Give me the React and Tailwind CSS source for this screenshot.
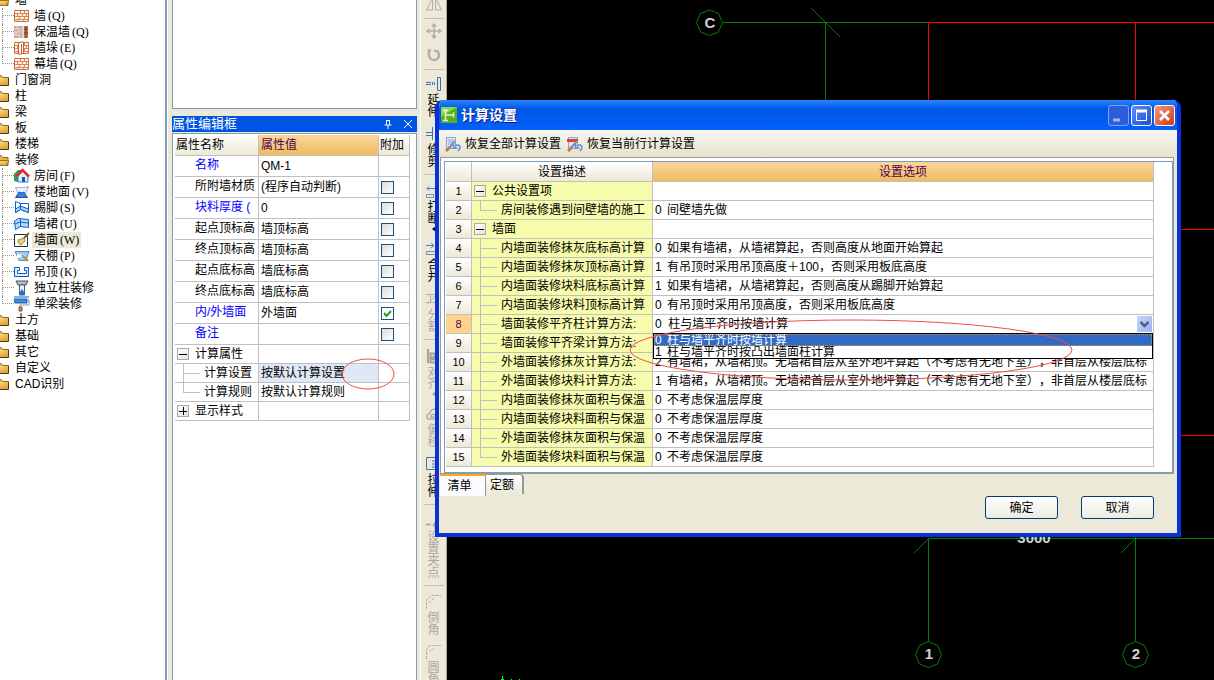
import React, { useState } from 'react';
import clsx from 'clsx';

const treeItems = [
  { label: '墙', folder: 'open' },
  { label: '墙', hotkey: 'Q', icon: 'brick' },
  { label: '保温墙', hotkey: 'Q', icon: 'insulated' },
  { label: '墙垛', hotkey: 'E', icon: 'pier' },
  { label: '幕墙', hotkey: 'Q', icon: 'brick', last: true },
  { label: '门窗洞', folder: 'closed' },
  { label: '柱', folder: 'closed' },
  { label: '梁', folder: 'closed' },
  { label: '板', folder: 'closed' },
  { label: '楼梯', folder: 'closed' },
  { label: '装修', folder: 'open' },
  { label: '房间', hotkey: 'F', icon: 'house' },
  { label: '楼地面', hotkey: 'V', icon: 'floor' },
  { label: '踢脚', hotkey: 'S', icon: 'skirting' },
  { label: '墙裙', hotkey: 'U', icon: 'dado' },
  { label: '墙面', hotkey: 'W', icon: 'wallFace', selected: true },
  { label: '天棚', hotkey: 'P', icon: 'ceiling' },
  { label: '吊顶', hotkey: 'K', icon: 'suspended' },
  { label: '独立柱装修', icon: 'column' },
  { label: '单梁装修', icon: 'roller', last: true },
  { label: '土方', folder: 'closed' },
  { label: '基础', folder: 'closed' },
  { label: '其它', folder: 'closed' },
  { label: '自定义', folder: 'closed' },
  { label: 'CAD识别', folder: 'closed' },
];

const properties = [
  { name: '名称', value: 'QM-1', blue: true },
  { name: '所附墙材质', value: '(程序自动判断)', check: false },
  { name: '块料厚度 (', value: '0', blue: true, check: false },
  { name: '起点顶标高', value: '墙顶标高', check: false },
  { name: '终点顶标高', value: '墙顶标高', check: false },
  { name: '起点底标高', value: '墙底标高', check: false },
  { name: '终点底标高', value: '墙底标高', check: false },
  { name: '内/外墙面', value: '外墙面', blue: true, check: true },
  { name: '备注', value: '', blue: true, check: false },
];

const tools = [
  { label: '延伸', icon: 'extend' },
  { label: '修剪', icon: 'trim', divider: true },
  { label: '打断', icon: 'break', arrow: true },
  { label: '合并', icon: 'merge' },
  { label: '分割', icon: 'split', disabled: true, divider: true },
  { label: '对齐', icon: 'align', disabled: true, arrow: true },
  { label: '偏移', icon: 'offset', disabled: true },
  { label: '拉伸', icon: 'stretch', divider: true },
  { label: '设置夹点', icon: 'grip', disabled: true, divider: true },
  { label: '倒角', icon: 'chamfer', disabled: true },
  { label: '圆角', icon: 'fillet', disabled: true },
];

const settings = [
  { name: '公共设置项', group: true },
  { name: '房间装修遇到间壁墙的施工', code: '0', text: '间壁墙先做', last: true },
  { name: '墙面', group: true },
  { name: '内墙面装修抹灰底标高计算', code: '0', text: '如果有墙裙，从墙裙算起，否则高度从地面开始算起' },
  { name: '内墙面装修抹灰顶标高计算', code: '1', text: '有吊顶时采用吊顶高度＋100，否则采用板底高度' },
  { name: '内墙面装修块料底标高计算', code: '1', text: '如果有墙裙，从墙裙算起，否则高度从踢脚开始算起' },
  { name: '内墙面装修块料顶标高计算', code: '0', text: '有吊顶时采用吊顶高度，否则采用板底高度' },
  { name: '墙面装修平齐柱计算方法:', editing: true },
  { name: '墙面装修平齐梁计算方法:' },
  { name: '外墙面装修抹灰计算方法:', code: '2', text: '有墙裙，从墙裙顶。无墙裙首层从室外地坪算起（不考虑有无地下室），非首层从楼层底标' },
  { name: '外墙面装修块料计算方法:', code: '1', text: '有墙裙，从墙裙顶。无墙裙首层从室外地坪算起（不考虑有无地下室），非首层从楼层底标' },
  { name: '内墙面装修抹灰面积与保温', code: '0', text: '不考虑保温层厚度' },
  { name: '内墙面装修块料面积与保温', code: '0', text: '不考虑保温层厚度' },
  { name: '外墙面装修抹灰面积与保温', code: '0', text: '不考虑保温层厚度' },
  { name: '外墙面装修块料面积与保温', code: '0', text: '不考虑保温层厚度', last: true },
];

const columnOptions = ['柱与墙平齐时按墙计算', '柱与墙平齐时按凸出墙面柱计算'];

function FolderIcon({ open }) {
  return (
    <svg className="-ml-1.5 h-4 w-[15px] shrink-0" viewBox="0 0 15 16">
      <defs>
        <linearGradient id="folder" x1="0" y1="0" x2="1" y2="1">
          <stop offset="0" stopColor="#ffe48c" />
          <stop offset="1" stopColor="#dd9c2a" />
        </linearGradient>
      </defs>
      <path d="M0 3.500h7l2 2h5v8H0z" fill="#e8b448" stroke="#8a6414" />
      {open ? (
        <path d="M0 8.500h15l-3 5H0z" fill="url(#folder)" stroke="#9c7420" />
      ) : (
        <>
          <path d="M0 6h14v7H0z" fill="url(#folder)" />
          <path d="M0 13.500h14.500v-8" fill="none" stroke="#4a3a18" />
        </>
      )}
    </svg>
  );
}

function Bricks() {
  return (
    <>
      <path d="M.5 2.500h14v11H.5z" fill="#fff1e4" stroke="#c8703c" />
      <path d="M1 5.500h13M1 8.500h13M1 11.500h13M6.500 3v2M10.500 3v2M3.500 6v2M8.500 6v2M12.500 6v2M5.500 9v2M10.500 9v2M4 12v1M9.500 12v1" stroke="#d88858" />
    </>
  );
}

const treeIcons = {
  brick: <Bricks />,
  insulated: (
    <>
      <path d="M0 2h7v12H0z" fill="#d8a0a0" />
      <path d="M0 5h7M0 8h7M0 11h7M3 2v3M5 5v3M2 8v3M5 11v3" stroke="#f4dada" />
      <path d="M7.500 2v12M9 2v12" stroke="#a8b8a8" />
      <path d="M10 2h4v12h-4z" fill="#c87848" />
      <path d="M10 5h4M10 9h4M12 2v12" stroke="#7c3c1c" />
    </>
  ),
  pier: (
    <>
      <Bricks />
      <path d="M4.500 4l2-2h3v11l-2 1h-3z" fill="#fff" stroke="#d05c24" />
      <path d="M7.500 4v10" stroke="#d05c24" />
    </>
  ),
  house: (
    <>
      <path d="M0 6l4-4h4L4 8v6L0 13z" fill="#2f9c48" />
      <path d="M4 8l5-5 5 5v6H4z" fill="#dfeeff" stroke="#3878c8" />
      <path d="M3 8l5.500-6L15 8.500" fill="none" stroke="#e02828" strokeWidth="2.500" />
      <path d="M8 9h3v5H8z" fill="#1858a8" />
    </>
  ),
  floor: (
    <>
      <path d="M1 3l3 3M14 2l-3 5M1 14l3-4M14 14l-3-4" stroke="#8c7040" />
      <path d="M1.500 3.500h13l-3 6H4z" fill="#e8f2ff" stroke="#a8b8d0" />
      <path d="M2 13.500L5 8l3 1 2-1 3 5.500z" fill="#3a80e0" stroke="#1458b8" />
    </>
  ),
  skirting: (
    <>
      <path d="M1.500 1.500l5 2h8v9l-8-3-5 3z" fill="#fff" stroke="#0a64c8" />
      <path d="M1.500 9l5-3 8 3v3.500l-8-3-5 3z" fill="#a8d4ff" stroke="#0a64c8" />
      <path d="M6.500 3.500v6" stroke="#0a64c8" />
    </>
  ),
  dado: (
    <>
      <path d="M.5 5l4-2.500 10 1v8l-8-1-5 3z" fill="#b8d8f8" stroke="#0a64c8" />
      <path d="M1 8l5-2 8 1M6.500 3v8" fill="none" stroke="#0a64c8" />
    </>
  ),
  wallFace: (
    <>
      <path d="M.5 2.500h13v12H.5z" fill="#fff" stroke="#1c2c54" />
      <path d="M4 8l6-2 1 3-4 4c-2 0-3-3-3-5z" fill="#e8d070" stroke="#a09030" />
      <path d="M10 6l5-5" stroke="#7c6420" strokeWidth="2" />
    </>
  ),
  ceiling: (
    <>
      <path d="M1 3.500h14l-3 9H5z" fill="#9cc8f8" stroke="#5c8cc8" />
      <path d="M1 12l4-6M4 9l5-2 2 3" fill="none" stroke="#fff" strokeWidth="2" />
      <path d="M8 7l6 6" stroke="#b09030" strokeWidth="2" />
    </>
  ),
  suspended: (
    <path d="M.5 3.500h5v3h-2v3h9v-3h-2v-3h4v9H.5z" fill="#dcecff" stroke="#0a5cc0" />
  ),
  column: (
    <>
      <path d="M2 1h12l-2 4H4z" fill="#bcbcbc" stroke="#505050" />
      <path d="M5.500 5h5v10h-5z" fill="#e8f2ff" stroke="#485878" />
      <path d="M6 12l2-3 2 3v3H6z" fill="#2470d0" />
    </>
  ),
  roller: (
    <>
      <path d="M0 1h15M0 3h13v4H1z" fill="#3c8ce0" stroke="#1460b8" />
      <path d="M13 4h2v5H6v2" fill="none" stroke="#8c98a8" />
      <path d="M5 11h3v4H5z" fill="#c88c58" stroke="#8c5424" />
    </>
  ),
};

function TreePanel() {
  return (
    <nav className="w-[165px] shrink-0 overflow-hidden bg-white">
      <ul className="-mt-2">
        {treeItems.map((item, i) => (
          <li key={i}>
            <button className="flex h-4 items-center whitespace-nowrap">
              {item.folder ? (
                <>
                  <FolderIcon open={item.folder === 'open'} />
                  <span className="pl-1.5">{item.label}</span>
                </>
              ) : (
                <>
                  <span className="ml-0.5 flex h-4 w-3 shrink-0 flex-col">
                    <span className="h-2 w-full border-b border-l border-dotted border-[#9c9884]" />
                    {!item.last && <span className="grow border-l border-dotted border-[#9c9884]" />}
                  </span>
                  <svg className="h-4 w-4 shrink-0" viewBox="0 0 16 16" fill="none">{treeIcons[item.icon]}</svg>
                  <span className={clsx('ml-0.5 px-0.5', item.selected && 'bg-[#ece9d8]')}>
                    {item.label}
                    {item.hotkey && <span className="pl-0.5 font-['Liberation_Serif',serif]">({item.hotkey})</span>}
                  </span>
                </>
              )}
            </button>
          </li>
        ))}
      </ul>
    </nav>
  );
}

function ExpandBox({ open }) {
  return (
    <button
      aria-label={open ? '折叠' : '展开'}
      className="flex size-3 shrink-0 items-center justify-center border border-[#a8a8a8] bg-linear-to-br from-white to-[#e4e2da]"
    >
      <svg className="size-2" viewBox="0 0 8 8">
        <path d={open ? 'M0 4.500h8' : 'M0 4.500h8M4.500 0v8'} stroke="#000" />
      </svg>
    </button>
  );
}

function Branch({ last }) {
  return (
    <span className="ml-2 flex w-[17px] shrink-0 flex-col self-stretch">
      <span className="h-2.5 border-b border-l border-[#c0c0c0]" />
      {!last && <span className="grow border-l border-[#c0c0c0]" />}
    </span>
  );
}

function PropertyPanel() {
  const cell = 'border-b border-r border-[#c0c0c0] p-0';
  return (
    <section className="flex w-[245px] shrink-0 flex-col">
      <div className="h-[109px] border border-t-0 border-[#7f9db9] bg-white" />
      <header className="mt-[7px] flex h-4 items-center bg-[#0054e3] text-white">
        <h2 className="grow text-[13px] leading-4">属性编辑框</h2>
        <button aria-label="固定" className="mr-2.5">
          <svg className="size-2.5" viewBox="0 0 10 10" fill="none" stroke="#fff">
            <path d="M3.500 1v4.500M6.500 1v4.500M3 1.500h4M1.500 6h7M5 6v4" />
          </svg>
        </button>
        <button aria-label="关闭" className="mr-1">
          <svg className="size-2.5" viewBox="0 0 10 10" stroke="#fff">
            <path d="M1 1l8 8M9 1L1 9" />
          </svg>
        </button>
      </header>
      <div className="relative mt-px grow border border-b-0 border-[#7f9db9] bg-white pl-0.5 pt-px">
        <table className="w-[235px] table-fixed border-separate border-spacing-0 whitespace-nowrap">
          <colgroup>
            <col className="w-[84px]" />
            <col className="w-[120px]" />
            <col />
          </colgroup>
          <thead>
            <tr className="h-[21px] text-left">
              <th className={clsx(cell, 'bg-linear-to-b from-white to-[#ece9d8] pl-px font-normal')}>属性名称</th>
              <th className={clsx(cell, 'bg-linear-to-b from-[#f9d79c] to-[#efbc5c] pl-0.5 font-normal text-[#500050]')}>属性值</th>
              <th className={clsx(cell, 'bg-linear-to-b from-white to-[#ece9d8] pl-px font-normal')}>附加</th>
            </tr>
          </thead>
          <tbody>
            {properties.map((p) => (
              <tr key={p.name} className="h-[21px]">
                <td className={clsx(cell, 'pb-0.5 pl-5', p.blue && 'text-[#0000ff]')}>{p.name}</td>
                <td className={clsx(cell, 'pl-0.5')}>{p.value}</td>
                <td className={cell}>
                  {p.check !== undefined && (
                    <input
                      type="checkbox"
                      aria-label={p.name}
                      defaultChecked={p.check}
                      className="ml-0.5 block size-[13px] appearance-none border border-[#1c5180] bg-linear-to-br from-[#dcdcd7] to-white checked:bg-[url('data:image/svg+xml,%3Csvg%20xmlns=%22http://www.w3.org/2000/svg%22%20viewBox=%220%200%2011%2011%22%3E%3Cpath%20d=%22M2%205l2.500%203L9%203%22%20fill=%22none%22%20stroke=%22%2321a121%22%20stroke-width=%222%22/%3E%3C/svg%3E')]"
                    />
                  )}
                </td>
              </tr>
            ))}
            <tr className="h-[19px]">
              <td className={cell}>
                <span className="flex items-center gap-1.5 pl-0.5"><ExpandBox open />计算属性</span>
              </td>
              <td className={cell} />
              <td className={cell} />
            </tr>
            {['计算设置', '计算规则'].map((name, i) => (
              <tr key={name} className="h-[19px]">
                <td className={cell}>
                  <span className="flex h-[18px] items-center"><Branch last={i === 1} /><span className="pl-1">{name}</span></span>
                </td>
                <td className={clsx(cell, 'pl-0.5', i === 0 && 'bg-[#dfe8f6]')}>按默认{name}</td>
                <td className={cell} />
              </tr>
            ))}
            <tr className="h-[19px]">
              <td className={cell}>
                <span className="flex items-center gap-1.5 pl-0.5"><ExpandBox />显示样式</span>
              </td>
              <td className={cell} />
              <td className={cell} />
            </tr>
          </tbody>
        </table>
        <svg className="pointer-events-none absolute left-[168px] top-[224px] h-8 w-[54px]" viewBox="0 0 54 32" fill="none">
          <ellipse cx="27" cy="16" rx="26" ry="15" stroke="#f04c4c" />
        </svg>
      </div>
    </section>
  );
}

const toolIcons = {
  extend: <path d="M0 6.500h5M0 8.500h5M6.500 6v3M8.500 6v3M11.500 1.500h3v13h-3z" stroke="#3c70b0" />,
  trim: <path d="M0 6.500h6M0 9.500h6M6.500 1v13M9.500 1v13" stroke="#3c70b0" />,
  break: (
    <>
      <path d="M1 5.500h9M3 3.500l-2 2 2 2" stroke="#4878d0" />
      <path d="M.5 11.500h7v3h-7zM9.500 11.500h5v3h-5z" stroke="#788cb0" />
    </>
  ),
  merge: (
    <>
      <path d="M0 4.500h8M5 2l3 2.500L5 7" stroke="#4878d0" />
      <path d="M.5 10.500h14v3H.5z" stroke="#788cb0" />
    </>
  ),
  split: <path d="M0 3.500h14M0 11.500h14M2 13L12 2M4.500 4v8M10.500 4v8" stroke="#b4b09c" />,
  align: <path d="M2 1v14M4.500 5.500h4v4h-4zM4.500 11.500h9v3h-9z" stroke="#a8a490" strokeWidth="2" />,
  offset: <path d="M2 13c-3-4 1-5 2-6 1-5 6-5 7-1 3 0 4 5 1 7zM5 11c-1-3 4-4 5 0z" stroke="#b4b09c" strokeWidth="1.500" />,
  stretch: <path d="M10 1.500H.5v12H10M6 5h3M6 8h3M6 11h3" stroke="#3c70b0" />,
  grip: <path d="M0 11.500h5M7 13l5-8M9 12h4v3H9z" stroke="#a8a490" strokeWidth="1.500" />,
  chamfer: <path d="M.5 15V6l5-4.500H15M3 9l5-5" stroke="#b4b09c" strokeDasharray="3 1" />,
  fillet: <path d="M.5 15V8c0-4 2-6.500 6-6.500H15M4 8c0-2 2-3 4-3" stroke="#b4b09c" strokeDasharray="3 1" />,
};

function EditToolbar() {
  return (
    <aside className="ml-[3px] flex w-[27px] shrink-0 flex-col items-center overflow-hidden border-l border-r border-l-white border-r-[#aca899]">
      <button aria-label="镜像">
        <svg className="-mt-1 block size-4" viewBox="0 0 16 16" fill="none" stroke="#b4b09c">
          <path d="M6.500 2v12h-6zM9.500 2v12h6z" />
        </svg>
      </button>
      <hr className="mt-1.5 w-5 border-[#c4c0ac]" />
      <button aria-label="移动">
        <svg className="mt-1 block size-4" viewBox="0 0 16 16" fill="none" stroke="#b4b09c" strokeWidth="1.500">
          <path d="M8 1v14M1 8h14M6 3.500L8 1l2 2.500M6 12.500L8 15l2-2.500M3.500 6L1 8l2.500 2M12.500 6L15 8l-2.500 2" />
        </svg>
      </button>
      <button aria-label="旋转">
        <svg className="mt-2 block size-4" viewBox="0 0 16 16" fill="none" stroke="#b4b09c" strokeWidth="2.500">
          <path d="M5 3.500h-2v5a5 5 0 0 0 10-1c0-3-2-4-5-3.500" />
        </svg>
      </button>
      <hr className="mb-1 mt-1.5 w-5 border-[#c4c0ac]" />
      {tools.map((t) => (
        <React.Fragment key={t.label}>
          <button
            disabled={t.disabled}
            className={clsx('flex shrink-0 flex-col items-center pb-1.5', t.disabled ? 'text-[#aca899]' : 'text-black')}
          >
            <svg className="my-0.5 h-4 w-4" viewBox="0 0 16 16" fill="none">{toolIcons[t.icon]}</svg>
            <span className="w-3 break-all text-xs leading-3">{t.label}</span>
            {t.arrow && (
              <svg className="h-2 w-2" viewBox="0 0 8 8"><path d="M6 1v6L2 4z" fill="currentColor" /></svg>
            )}
          </button>
          {t.divider && <hr className="mb-1.5 w-5 shrink-0 border-[#c4c0ac]" />}
        </React.Fragment>
      ))}
    </aside>
  );
}

function DrawingCanvas() {
  return (
    <main className="min-w-0 grow bg-black">
      <svg className="block h-full w-full" fill="none" stroke="#008000">
        <path d="M276 22.500h205M364 8l29 29M378.500 22v90" />
        <path d="M481.500 112V22.500H2000M688.500 22v90M700 229.500h1300M700 435.500h1300" stroke="#ff0000" />
        <path d="M481.500 641V538.500H2000M688.500 530v111M481 539l-14 14M688 539l-14 14" />
        <path d="M262.500 10l9 3.500 4 9-4 9.500-9 3.500-9-3.500-4-9.500 4-9z" />
        <path d="M481.500 641.500l9 4 4 9-4 9.500-9 3.500-9-3.500-4-9.500 4-9z" />
        <path d="M688.500 641.500l9 4 4 9-4 9.500-9 3.500-9-3.500-4-9.500 4-9z" />
        <g fill="#d0d0d0" stroke="none" textAnchor="middle" className="font-['Liberation_Sans',sans-serif] text-[15px] font-bold">
          <text x="263" y="28">C</text>
          <text x="482" y="659">1</text>
          <text x="689" y="659">2</text>
          <text x="587" y="543">3000</text>
        </g>
        <path d="M55.500 676v4M54 679.500h3M64 679.500h1M72 679.500h1" stroke="#00ff00" />
      </svg>
    </main>
  );
}

function RestoreIcon({ row }) {
  return (
    <svg className="size-4" viewBox="0 0 16 16" fill="none">
      <path d="M1.500 1.500h9v11h-9z" fill="#dbe7f8" stroke="#8ca4cc" />
      {row ? <path d="M0 3h11v3H0z" fill="#e03838" /> : <path d="M3 4h6M3 6h6M3 8h6" stroke="#88acdc" />}
      <path d="M4 12l6-7" stroke="#7c90c0" strokeWidth="2" />
      <path d="M1 15l4-4" stroke="#c87850" strokeWidth="3" />
      <path d="M10 10c4-3 7 1 3 5M8.500 8v4h4" stroke="#5c8cd8" strokeWidth="1.500" />
    </svg>
  );
}

function TitleButton({ label, className, children }) {
  return (
    <button aria-label={label} className={clsx('size-[21px] rounded-[3px] border', className)}>
      <svg className="size-full" viewBox="0 0 19 19" fill="none" stroke="#fff">{children}</svg>
    </button>
  );
}

function SettingOption({ row }) {
  const [value, setValue] = useState(0);

  if (!row.editing) {
    return (
      <span className="flex overflow-hidden pl-0.5">
        <span className="w-3 shrink-0">{row.code}</span>
        {row.text}
      </span>
    );
  }

  return (
    <div className="relative">
      <select
        aria-label={row.name}
        value={value}
        onChange={(e) => setValue(Number(e.target.value))}
        className="block h-[18px] w-full appearance-none bg-white pl-0.5 leading-4"
      >
        {columnOptions.map((option, i) => (
          <option key={option} value={i}>{i}{'\u00a0\u00a0'}{option}</option>
        ))}
      </select>
      <svg className="pointer-events-none absolute right-px top-px h-4 w-[15px] bg-linear-to-br from-[#c8d6fb] to-[#9cb2f2]" viewBox="0 0 15 16" fill="none">
        <path d="M3.500 6l4 4 4-4" stroke="#4d6185" strokeWidth="2.500" />
      </svg>
      <ul role="listbox" className="absolute left-0 right-0 top-full border border-black bg-white">
        {columnOptions.map((option, i) => (
          <li
            key={option}
            role="option"
            aria-selected={value === i}
            className={clsx(
              'flex h-3 overflow-hidden pl-px leading-3',
              value === i && 'bg-[#316ac5] text-white outline -outline-offset-1 outline-dotted outline-[#ce953a]',
            )}
          >
            <span className="w-3 shrink-0">{i}</span>
            {option}
          </li>
        ))}
      </ul>
    </div>
  );
}

function SettingsTable() {
  const cell = 'border-b border-r border-[#c0c0c0] p-0';
  const head = 'bg-linear-to-b from-white to-[#ece9d8] font-normal';
  return (
    <table className="w-full table-fixed border-separate border-spacing-0 whitespace-nowrap">
      <colgroup>
        <col className="w-[26px]" />
        <col className="w-[181px]" />
        <col />
      </colgroup>
      <thead>
        <tr className="h-5">
          <th className={clsx(cell, head)} />
          <th className={clsx(cell, head)}>设置描述</th>
          <th className={clsx(cell, 'bg-linear-to-b from-[#f9d79c] to-[#efbc5c] font-normal text-[#500050]')}>设置选项</th>
        </tr>
      </thead>
      <tbody>
        {settings.map((row, i) => (
          <tr key={row.name} className="h-[19px]">
            <td
              className={clsx(
                cell,
                'text-center text-[11px]',
                row.editing ? 'bg-[#ffd38c] text-[#500050]' : 'bg-linear-to-b from-white to-[#ece9d8]',
              )}
            >
              {i + 1}
            </td>
            <td className={clsx(cell, 'bg-[#f7fbac]')}>
              {row.group ? (
                <span className="flex items-center gap-1.5 pl-0.5"><ExpandBox open />{row.name}</span>
              ) : (
                <span className="flex h-[18px] items-center"><Branch last={row.last} /><span className="pl-1">{row.name}</span></span>
              )}
            </td>
            <td className={cell}><SettingOption row={row} /></td>
          </tr>
        ))}
      </tbody>
    </table>
  );
}

function SettingsDialog() {
  return (
    <div
      role="dialog"
      aria-label="计算设置"
      className="absolute left-[435px] top-[100px] flex w-[746px] flex-col overflow-hidden rounded-t-lg border-x-4 border-b-4 border-[#0831d9] bg-[#ece9d8]"
    >
      <header className="-mx-1 flex h-[30px] items-center gap-0.5 bg-linear-to-b from-[#2a86ff] via-[#0055e5] via-30% to-[#0262fb] px-1.5 text-white">
        <svg className="mr-0.5 size-4 shrink-0" viewBox="0 0 16 16" fill="none">
          <path d="M0 0h16v16H0z" fill="#58b01c" />
          <path d="M0 0h16L0 10z" fill="#8cd850" />
          <path d="M4.500 2v12M2 3.500h5M2 13.500h5M5 8h8M12.500 5.500v5" stroke="#e4f0dc" strokeWidth="1.500" />
        </svg>
        <h1 className="grow text-sm font-bold [text-shadow:1px_1px_#0f1089]">计算设置</h1>
        <TitleButton label="最小化" className="border-[#7ea2f4] bg-[#2a5cdc]">
          <path d="M4 14h7" stroke="#9cb4f0" strokeWidth="3" />
        </TitleButton>
        <TitleButton label="最大化" className="border-white bg-linear-to-br from-[#5c8cf8] to-[#1c4cd8]">
          <path d="M4.500 5v9.500h10V5" />
          <path d="M4 5h11" strokeWidth="3" />
        </TitleButton>
        <TitleButton label="关闭" className="border-white bg-linear-to-br from-[#f09878] to-[#d0340c]">
          <path d="M5 5l9 9M14 5l-9 9" strokeWidth="2.500" />
        </TitleButton>
      </header>
      <div className="flex h-[27px] items-center gap-1.5 bg-linear-to-b from-[#f8f7f2] to-[#e6e2ce] pl-1.5">
        <button className="flex items-center gap-1"><RestoreIcon />恢复全部计算设置</button>
        <button className="flex items-center gap-1"><RestoreIcon row />恢复当前行计算设置</button>
      </div>
      <div className="ml-px mr-[3px] border border-[#919b9c] bg-white pl-[3px] pt-[3px]">
        <div className="relative border border-[#7f9db9] pb-[5px] pl-px pr-[18px]">
          <SettingsTable />
          <svg className="pointer-events-none absolute left-[184px] top-[157px] h-[62px] w-[444px]" viewBox="0 0 444 62" fill="none">
            <ellipse cx="222" cy="31" rx="221" ry="30" stroke="#f04c4c" />
          </svg>
        </div>
      </div>
      <div className="flex items-start pl-px">
        <button className="h-[22px] w-[46px] border-r border-t-2 border-r-[#919b9c] border-t-[#ffa51f] bg-[#fcfcfe] pr-1.5">清单</button>
        <button className="h-5 w-[38px] rounded-tr-sm border-r-2 border-t border-[#919b9c] bg-linear-to-b from-white to-[#ece9d8] pr-1">定额</button>
      </div>
      <footer className="flex justify-end gap-[23px] pb-[14px] pr-[23px]">
        {['确定', '取消'].map((label) => (
          <button key={label} className="h-[23px] w-[73px] rounded-[3px] border border-[#003c74] bg-linear-to-b from-white to-[#ecebe5]">
            {label}
          </button>
        ))}
      </footer>
    </div>
  );
}

export default function App() {
  return (
    <div className="relative flex h-screen overflow-hidden bg-[#ece9d8] font-['Liberation_Sans','Noto_Sans_CJK_SC',sans-serif] text-xs leading-4 text-black [text-spacing-trim:space-all]">
      <TreePanel />
      <div className="mr-1 w-[3px] shrink-0 border-l-2 border-r border-l-[#7f9db9] border-r-white" />
      <PropertyPanel />
      <EditToolbar />
      <DrawingCanvas />
      <SettingsDialog />
    </div>
  );
}
